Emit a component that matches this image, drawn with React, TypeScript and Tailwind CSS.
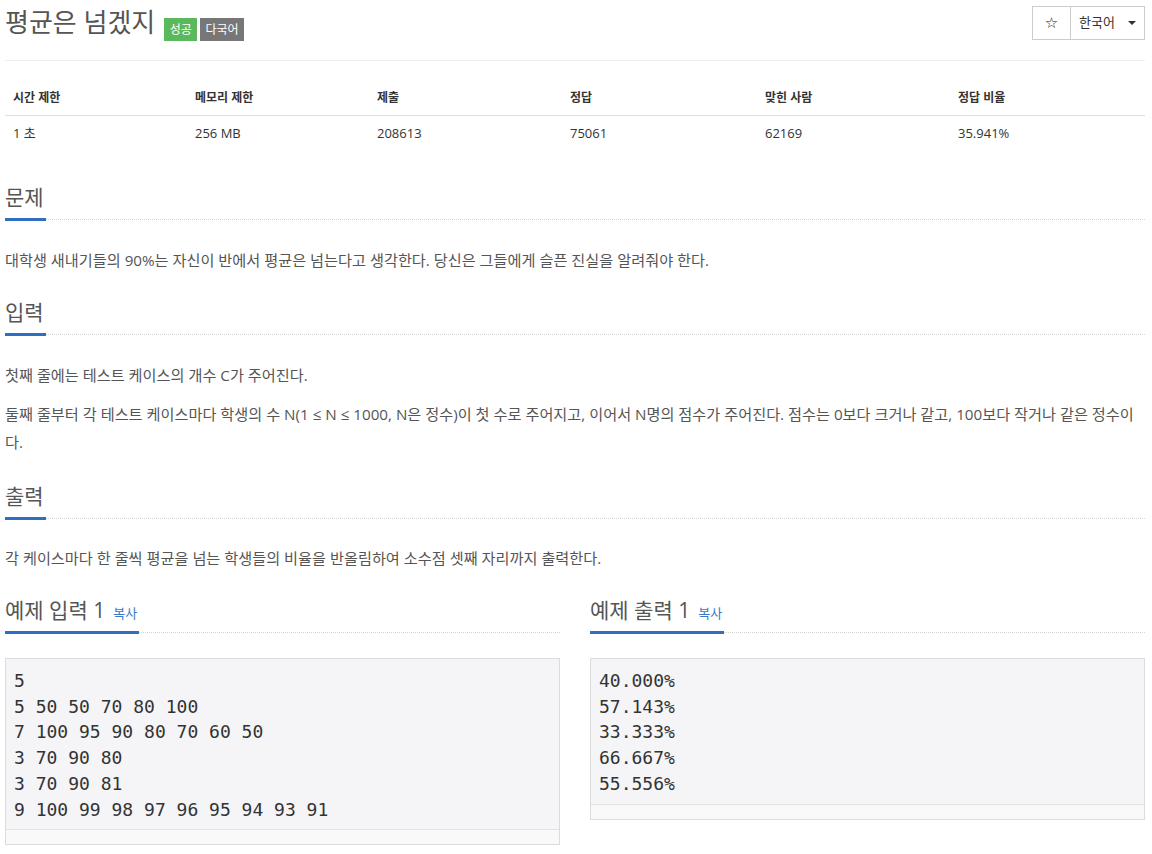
import type { ReactNode } from 'react';

const stats = [
  { label: '시간 제한', value: '1 초' },
  { label: '메모리 제한', value: '256 MB' },
  { label: '제출', value: '208613' },
  { label: '정답', value: '75061' },
  { label: '맞힌 사람', value: '62169' },
  { label: '정답 비율', value: '35.941%' },
];

const sampleInput = ['5', '5 50 50 70 80 100', '7 100 95 90 80 70 60 50', '3 70 90 80', '3 70 90 81', '9 100 99 98 97 96 95 94 93 91'];
const sampleOutput = ['40.000%', '57.143%', '33.333%', '66.667%', '55.556%'];

function Headline({ children, copy }: { children: ReactNode; copy?: boolean }) {
  return (
    <div className="flex items-end">
      <h2 className="flex items-baseline border-b-[3px] border-[#2f6ec0] pb-[6px] pr-[2px] text-[21px] leading-[30px] text-[#555]">
        <span>{children}</span>
        {copy && (
          <a href="#" className="ml-[8px] text-[13px] leading-none text-[#3a78c8]">
            복사
          </a>
        )}
      </h2>
      <div className="mb-[1px] flex-1 border-b border-dotted border-[#d4d4d4]" />
    </div>
  );
}

function SampleBox({ lines }: { lines: string[] }) {
  return (
    <div className="mt-[24px] border border-[#dcdce0] bg-[#f5f5f7]">
      <pre className="pb-[7px] pl-[8px] pt-[9px] font-['DejaVu_Sans_Mono',monospace] text-[18px] leading-[25.7px] text-[#333]">
        {lines.join('\n')}
      </pre>
      <div className="h-[15px] border-t border-[#e3e3e6] bg-[#f9f9f9]" />
    </div>
  );
}

export default function App() {
  return (
    <div className="min-h-[854px] bg-white font-['Open_Sans','Noto_Sans_CJK_KR',sans-serif] text-[#555]">
      <div className="mx-[5px] w-[1140px]">
        {/* page header */}
        <div className="flex h-[61px] items-start border-b border-[#eee]">
          <h1 className="mt-[7px] text-[26px] leading-[30px] text-[#555]">평균은 넘겠지</h1>
          <span className="ml-[9px] mt-[18px] flex h-[23px] items-center bg-[#5cb85c] px-[5.5px] text-[12px] text-white">성공</span>
          <span className="ml-[3px] mt-[18px] flex h-[23px] items-center bg-[#777] px-[5px] text-[12px] text-white">다국어</span>
          <div className="ml-auto mt-[6px] flex h-[34px] border border-[#ccc] text-[13px] text-[#333]">
            <button type="button" className="flex w-[38px] items-center justify-center border-r border-[#ccc] font-['DejaVu_Sans',sans-serif] text-[15px] font-bold text-[#222]">
              ☆
            </button>
            <button type="button" className="flex w-[73px] items-center pl-[8px]">
              한국어
              <span className="ml-[13px] h-0 w-0 border-x-[4px] border-t-[4px] border-x-transparent border-t-[#333]" />
            </button>
          </div>
        </div>

        {/* stats table */}
        <div className="mt-[19px] text-[#333]">
          <div className="grid h-[36px] grid-cols-[182px_182px_193px_195px_193px_1fr] items-center border-b border-[#ddd]">
            {stats.map((s) => (
              <div key={s.label} className="px-[8px] text-[12px] font-bold">
                {s.label}
              </div>
            ))}
          </div>
          <div className="grid h-[36px] grid-cols-[182px_182px_193px_195px_193px_1fr] items-center">
            {stats.map((s) => (
              <div key={s.label} className="px-[8px] text-[13px]">
                {s.value}
              </div>
            ))}
          </div>
        </div>

        <section className="mt-[30px]">
          <Headline>문제</Headline>
          <div className="mt-[25px] flex flex-col gap-[11px] text-[15.2px] leading-[28px]">
            <p>대학생 새내기들의 90%는 자신이 반에서 평균은 넘는다고 생각한다. 당신은 그들에게 슬픈 진실을 알려줘야 한다.</p>
          </div>
        </section>

        <section className="mt-[23px]">
          <Headline>입력</Headline>
          <div className="mt-[25px] flex flex-col gap-[11px] text-[15.2px] leading-[28px]">
            <p>첫째 줄에는 테스트 케이스의 개수 C가 주어진다.</p>
            <p>
              둘째 줄부터 각 테스트 케이스마다 학생의 수 N(1 ≤ N ≤ 1000, N은 정수)이 첫 수로 주어지고, 이어서 N명의 점수가 주어진다. 점수는 0보다 크거나 같고, 100보다 작거나 같은 정수이다.
            </p>
          </div>
        </section>

        <section className="mt-[25px]">
          <Headline>출력</Headline>
          <div className="mt-[24px] flex flex-col gap-[11px] text-[15.2px] leading-[28px]">
            <p>각 케이스마다 한 줄씩 평균을 넘는 학생들의 비율을 반올림하여 소수점 셋째 자리까지 출력한다.</p>
          </div>
        </section>

        <div className="mt-[23px] grid grid-cols-2 gap-[30px]">
          <section>
            <Headline copy>예제 입력 1</Headline>
            <SampleBox lines={sampleInput} />
          </section>
          <section>
            <Headline copy>예제 출력 1</Headline>
            <SampleBox lines={sampleOutput} />
          </section>
        </div>
      </div>
    </div>
  );
}
